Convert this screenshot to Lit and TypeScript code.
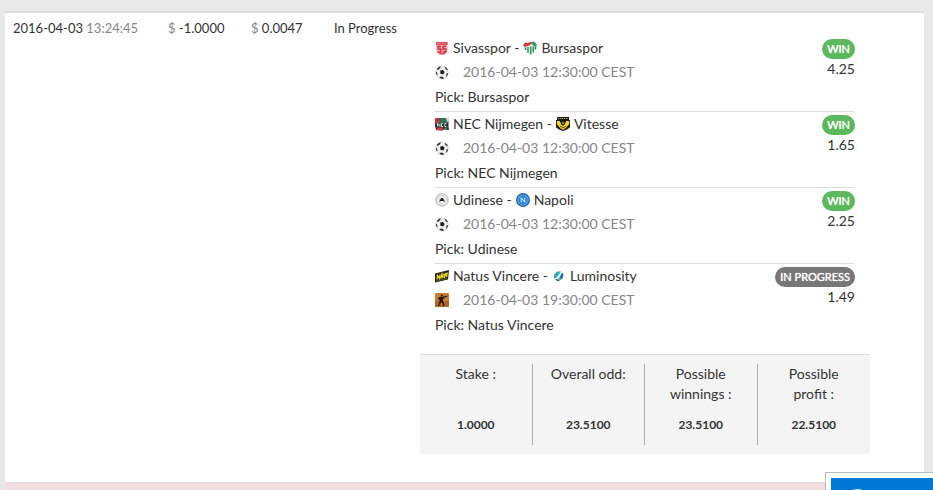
import { LitElement, html, css, svg } from "lit";
import { customElement, property } from "lit/decorators.js";

type Outcome = "win" | "pending";

interface Leg {
  home: string;
  homeIcon: string;
  away: string;
  awayIcon: string;
  sport: string;
  time: string;
  pick: string;
  outcome: Outcome;
  odd: string;
}

const LEGS: Leg[] = [
  { home: "Sivasspor", homeIcon: "sivas", away: "Bursaspor", awayIcon: "bursa", sport: "football", time: "2016-04-03 12:30:00 CEST", pick: "Bursaspor", outcome: "win", odd: "4.25" },
  { home: "NEC Nijmegen", homeIcon: "nec", away: "Vitesse", awayIcon: "vitesse", sport: "football", time: "2016-04-03 12:30:00 CEST", pick: "NEC Nijmegen", outcome: "win", odd: "1.65" },
  { home: "Udinese", homeIcon: "udinese", away: "Napoli", awayIcon: "napoli", sport: "football", time: "2016-04-03 12:30:00 CEST", pick: "Udinese", outcome: "win", odd: "2.25" },
  { home: "Natus Vincere", homeIcon: "navi", away: "Luminosity", awayIcon: "luminosity", sport: "csgo", time: "2016-04-03 19:30:00 CEST", pick: "Natus Vincere", outcome: "pending", odd: "1.49" },
];

const TOTALS = [
  { label: "Stake :", value: "1.0000" },
  { label: "Overall odd:", value: "23.5100" },
  { label: "Possible winnings :", value: "23.5100" },
  { label: "Possible profit :", value: "22.5100" },
];

const ICONS: Record<string, unknown> = {
  sivas: svg`
    <path d="M1 1H12.5V11Q11 13 7 14Q3 13 1.5 11Z" fill="#f4a9ae"/>
    <path d="M1 1H12.5V4H1Z" fill="#e04450"/>
    <path d="M1.5 2.5H12" stroke="#f5a9ae" stroke-width=".8" stroke-dasharray="1.5 1"/>
    <path d="M6 5.5H3V8H5.8V11H2.6M11 5.5H8V8H10.8V11H7.6" fill="none" stroke="#d62c3c" stroke-width="1.3"/>
    <path d="M4 12.8H10" stroke="#d62c3c"/>`,
  bursa: svg`
    <path d="M1 4H13V8L7.5 14L1 8Z" fill="#e4f3e8"/>
    <path d="M0 4.5L2 1.5L5 2L8 .5L9 3L5 5L2 6Z" fill="#d63a43"/>
    <path d="M8 1L11 .5L13.5 3V6L10 4.5Z" fill="#2c9a58"/>
    <path d="M2.5 6.5V9M5 6V12M7.8 5.5V13.5M10.3 5.5V11.5M12.5 5.5V8.5" stroke="#168a4b" stroke-width="1.3"/>`,
  nec: svg`
    <path d="M0 1H13.5V10L14 13L9 12.5L7 13.5L1 13L0 9Z" fill="#26302e"/>
    <path d="M0 1H9L4 6.5H0Z" fill="#d83a42"/>
    <path d="M5 1H12.5V6H3.5Z" fill="#2e7257"/>
    <path d="M1 4L5 1.5" stroke="#7c262c"/>
    <path d="M2.5 9.5V6.5L5 9.5V6.5M8 6.5H6.5V9.5H8M11.5 6.5H9.8V9.5H11.5" fill="none" stroke="#e9eeec" stroke-width=".9"/>
    <path d="M1 10.5H9L7 13.5L2 13Z" fill="#d63b44"/>
    <path d="M9 11L13 10L11.5 12.5L9 13Z" fill="#2e8257"/>
    <path d="M11 1L14 0V4L12 5Z" fill="#d9dedb"/>`,
  vitesse: svg`
    <path d="M1 0H13V3H14V10.5L10 13L7 14L4 13L0 10.5V3H1Z" fill="#171716"/>
    <path d="M2 1.5H12" stroke="#c9b43a" stroke-width="1" stroke-dasharray="1.2 .7"/>
    <path d="M.8 4H4L7 8L10 4H13.2V7L10 11L7 13L4 11L.8 7Z" fill="#f4d51f"/>
    <path d="M4 4H10L9 7L7 9L5 7Z" fill="#1b1b19"/>
    <path d="M5.5 5.5H8.5L7 7Z" fill="#e9e4bd"/>
    <path d="M4 9L7 11L10 9" fill="none" stroke="#1b1b19" stroke-width=".8"/>`,
  udinese: svg`
    <circle cx="7" cy="7" r="6.2" fill="#f3f0e8" stroke="#b7afa6"/>
    <circle cx="7" cy="7" r="4.7" fill="none" stroke="#cbc3b6" stroke-dasharray="1 1"/>
    <path d="M4 4H10V8L7 11L4 8Z" fill="#f8f8f7" stroke="#c5c0b8" stroke-width=".5"/>
    <path d="M4 9L6 5H8L10 9L8 8H6Z" fill="#23262b"/>`,
  napoli: svg`
    <circle cx="7" cy="7" r="7" fill="#2465a8"/>
    <circle cx="7" cy="7" r="5.6" fill="#65b0e8"/>
    <circle cx="7" cy="7" r="4.6" fill="#2781d1"/>
    <path d="M5.2 9.4V4.6L8.8 9.4V4.6" fill="none" stroke="#d8ecfb" stroke-width="1"/>`,
  navi: svg`
    <path d="M0 4.5L14 1L13 10.5L0 13.5Z" fill="#25251b"/>
    <path d="M2 10.5L2.5 6.5L4.5 9.5L5 5.5M5.8 9.5L7 5L8 9M8.7 4.5L9.5 8L11 4M12.3 3.5L11.5 8" fill="none" stroke="#eddf20" stroke-width="1.3"/>
    <path d="M1 12L12.5 9.5" stroke="#77731f" stroke-width=".6"/>`,
  luminosity: svg`
    <path d="M5 2.5H9L5 8.5L2 9.5V5.5Z" fill="#31aac5"/>
    <path d="M10 3.5L11.5 5.5L10.5 9.5L7.5 11.5H4L7.5 8.5Z" fill="#1678a3"/>
    <path d="M10 2.5L4 10H8.5" fill="none" stroke="#dff5f8" stroke-width=".8"/>
    <path d="M3.5 10.5L7 11.5" stroke="#164d70"/>`,
  football: svg`
    <circle cx="7" cy="7.3" r="6.3" fill="#f0f0f0" stroke="#d6d6d6" stroke-width=".7"/>
    <path d="M5.2 5.6L8 5L9.6 7L8.2 9.6L5.4 8.8Z" fill="#1c1c1c"/>
    <path d="M2 3.6L5 1.2L6 1.8L4 4.2L2.2 5ZM9.5 1.6L12.6 4L12.4 5.6L10.4 4ZM.8 6.6L2 7.4L2.6 10.2L1.4 9.8ZM4.6 11.8L7.8 11.8L9 13.4Q6.5 14 4.8 13ZM11.6 8.6L13.2 8Q12.8 10.8 10.8 12.3Z" fill="#2b2b2b"/>`,
  csgo: svg`
    <rect width="14" height="14" rx="1" fill="#cc7c35"/>
    <path d="M0 8H14V13Q14 14 13 14H1Q0 14 0 13Z" fill="#b1642a"/>
    <circle cx="6.8" cy="2.6" r="1" fill="#25180f"/>
    <path d="M5 3.8H8L12.5 2.6V3.6L8.8 5L7.6 7.5L9 10L9.4 13H8.2L7.6 10.6L6.3 9L5 11L4 13H3L4 10L4.8 7.4L4 6.4L3 6V5.2Z" fill="#25180f"/>`,
};

const icon = (name: string) =>
  html`<svg class="icon" viewBox="0 0 14 14" width="14" height="14" aria-hidden="true">${ICONS[name]}</svg>`;

@customElement("bet-leg")
class BetLeg extends LitElement {
  @property({ attribute: false }) leg!: Leg;

  static styles = css`
    :host { display: flex; justify-content: space-between; }
    .line { display: flex; align-items: center; gap: 4px; height: 24px; white-space: nowrap; }
    .time { gap: 14px; color: #868686; }
    .pick { height: 25px; padding-bottom: 2px; }
    .icon { flex: none; display: block; }
    .result { display: flex; flex-direction: column; align-items: flex-end; padding-top: 3px; }
    .badge { height: 20px; line-height: 20px; padding: 0 5px; border-radius: 10px; color: #fff; font-size: 11px; text-shadow: 0 0 1px #fff; white-space: nowrap; }
    .win { background: #5cb85c; }
    .pending { background: #777; }
    .odd { line-height: 20px; }
  `;

  render() {
    const l = this.leg;
    return html`
      <div>
        <div class="line">${icon(l.homeIcon)}<span>${l.home} -</span>${icon(l.awayIcon)}<span>${l.away}</span></div>
        <div class="line time">${icon(l.sport)}<time>${l.time}</time></div>
        <div class="line pick">Pick: ${l.pick}</div>
      </div>
      <div class="result">
        <span class="badge ${l.outcome}">${l.outcome === "win" ? "WIN" : "IN PROGRESS"}</span>
        <span class="odd">${l.odd}</span>
      </div>
    `;
  }
}

@customElement("app-root")
class AppRoot extends LitElement {
  static styles = css`
    :host { display: block; min-height: 100vh; box-sizing: border-box; padding: 11px 9px 0 5px; background: #e8e8e8; font-family: Lato, "Liberation Sans", sans-serif; font-size: 14px; line-height: 20px; color: #333; }
    .viewport { height: calc(100vh - 11px); overflow: hidden; }
    .bets { width: 100%; table-layout: fixed; border-collapse: separate; border-spacing: 0; background: #fff; }
    .cell { box-sizing: border-box; padding: 7px 0 28px 8px; border-top: 2px solid #ddd; vertical-align: top; text-align: left; font-size: 13px; line-height: 16px; white-space: nowrap; }
    .when { width: 155px; }
    .money { width: 83px; }
    .state { width: 86px; }
    .details { padding-top: 23px; padding-right: 54px; font-size: 14px; line-height: 20px; white-space: normal; }
    .muted { color: #868686; }
    .legs { list-style: none; margin: 0; padding: 0 15px; }
    .leg { border-bottom: 1px solid #ddd; }
    .leg:last-child { border-bottom: 0; }
    .totals { display: grid; grid-template-columns: repeat(4, 1fr); margin: 15px 0 0; padding: 9px 0; border-top: 1px solid #ddd; border-radius: 0 0 4px 4px; background: #f4f4f4; text-align: center; }
    .total { padding: 0 16px 10px; border-right: 1px solid #aaa; }
    .total:last-child { border-right: 0; }
    .label { min-height: 40px; }
    .value { margin: 11px 0 0; font-size: 12px; font-weight: 700; }
    .lost { height: 40px; padding: 0; border-top: 1px solid #ddd; background: #f2dede; }
    .popup { position: fixed; right: 0; bottom: 0; box-sizing: border-box; width: 108px; height: 18px; padding: 5px 0 0 5px; border: 1px solid #bbb; border-width: 1px 0 0 1px; background: #fff; }
    .banner { height: 12px; background: #0078d7; overflow: hidden; }
    .mark { display: block; }
  `;

  render() {
    return html`
      <div class="viewport">
        <table class="bets">
          <tbody>
            <tr>
              <td class="cell when">2016-04-03 <span class="muted">13:24:45</span></td>
              <td class="cell money"><span class="muted">$</span> -1.0000</td>
              <td class="cell money"><span class="muted">$</span> 0.0047</td>
              <td class="cell state">In Progress</td>
              <td class="cell details">
                <ul class="legs">
                  ${LEGS.map((leg) => html`<li class="leg"><bet-leg .leg=${leg}></bet-leg></li>`)}
                </ul>
                <dl class="totals">
                  ${TOTALS.map((t) => html`<div class="total"><dt class="label">${t.label}</dt><dd class="value">${t.value}</dd></div>`)}
                </dl>
              </td>
            </tr>
            <tr><td class="lost" colspan="5"></td></tr>
          </tbody>
        </table>
      </div>
      <aside class="popup">
        <div class="banner">
          <svg class="mark" width="40" height="12" viewBox="0 0 40 12" aria-hidden="true"><path d="M21 12L25 11H30V12Z" fill="#cfe4f7"/></svg>
        </div>
      </aside>
    `;
  }
}
